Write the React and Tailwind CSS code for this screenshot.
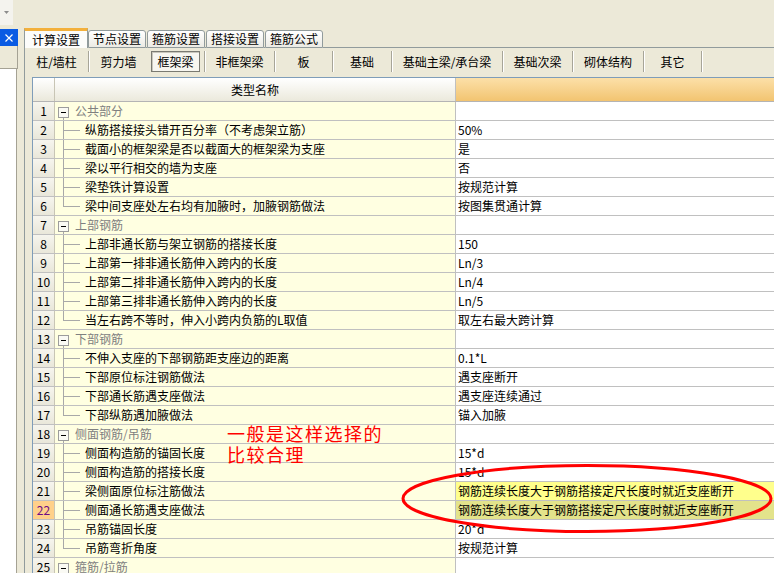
import React from 'react';

const rows = [
  { n: 1, g: true, t: '公共部分' },
  { n: 2, t: '纵筋搭接接头错开百分率（不考虑架立筋）', v: '50%' },
  { n: 3, t: '截面小的框架梁是否以截面大的框架梁为支座', v: '是' },
  { n: 4, t: '梁以平行相交的墙为支座', v: '否' },
  { n: 5, t: '梁垫铁计算设置', v: '按规范计算' },
  { n: 6, t: '梁中间支座处左右均有加腋时，加腋钢筋做法', v: '按图集贯通计算', last: true },
  { n: 7, g: true, t: '上部钢筋' },
  { n: 8, t: '上部非通长筋与架立钢筋的搭接长度', v: '150' },
  { n: 9, t: '上部第一排非通长筋伸入跨内的长度', v: 'Ln/3' },
  { n: 10, t: '上部第二排非通长筋伸入跨内的长度', v: 'Ln/4' },
  { n: 11, t: '上部第三排非通长筋伸入跨内的长度', v: 'Ln/5' },
  { n: 12, t: '当左右跨不等时，伸入小跨内负筋的L取值', v: '取左右最大跨计算', last: true },
  { n: 13, g: true, t: '下部钢筋' },
  { n: 14, t: '不伸入支座的下部钢筋距支座边的距离', v: '0.1*L' },
  { n: 15, t: '下部原位标注钢筋做法', v: '遇支座断开' },
  { n: 16, t: '下部通长筋遇支座做法', v: '遇支座连续通过' },
  { n: 17, t: '下部纵筋遇加腋做法', v: '锚入加腋', last: true },
  { n: 18, g: true, t: '侧面钢筋/吊筋' },
  { n: 19, t: '侧面构造筋的锚固长度', v: '15*d' },
  { n: 20, t: '侧面构造筋的搭接长度', v: '15*d' },
  { n: 21, t: '梁侧面原位标注筋做法', v: '钢筋连续长度大于钢筋搭接定尺长度时就近支座断开' },
  { n: 22, t: '侧面通长筋遇支座做法', v: '钢筋连续长度大于钢筋搭接定尺长度时就近支座断开' },
  { n: 23, t: '吊筋锚固长度', v: '20*d' },
  { n: 24, t: '吊筋弯折角度', v: '按规范计算', last: true },
  { n: 25, g: true, t: '箍筋/拉筋' },
];

const mainTabs = ['节点设置', '箍筋设置', '搭接设置', '箍筋公式'];

const subTabs = [
  { t: '柱/墙柱', w: 'w-[64px]', sep: true },
  { t: '剪力墙', w: 'w-[59px]', sep: false },
  { t: '框架梁', w: 'w-[57px]', sep: true, active: true },
  { t: '非框架梁', w: 'w-[70px]', sep: true },
  { t: '板', w: 'w-[58px]', sep: true },
  { t: '基础', w: 'w-[59px]', sep: true },
  { t: '基础主梁/承台梁', w: 'w-[111px]', sep: true },
  { t: '基础次梁', w: 'w-[70px]', sep: true },
  { t: '砌体结构', w: 'w-[71px]', sep: true },
  { t: '其它', w: 'w-[58px]', sep: true },
];

function Tree({ r }) {
  if (r.g) {
    return (
      <svg width="20" height="18" className="shrink-0">
        <rect x="3.5" y="5.5" width="10" height="10" fill="#FAFAF4" stroke="#9C9C9C" />
        <line x1="6" x2="11" y1="10.5" y2="10.5" stroke="#000" />
        {r.n !== 25 && <line x1="8.5" x2="8.5" y1="16" y2="18" stroke="#A8A8A8" />}
      </svg>
    );
  }
  return (
    <svg width="28" height="18" className="shrink-0">
      <line x1="8.5" x2="8.5" y1="0" y2={r.last ? 9.5 : 18} stroke="#A8A8A8" />
      <line x1="8" x2="25" y1="9.5" y2="9.5" stroke="#A8A8A8" />
    </svg>
  );
}

function Row({ r }) {
  const numCls =
    r.n === 22 ? 'bg-[#FFD08A] text-[#6E0D86]' : 'bg-linear-to-b from-[#F6F5EE] to-[#E9E7DA] text-black';
  const valBg = r.n === 21 ? 'bg-[#FFFF8C]' : r.n === 22 ? 'bg-[#E3E38B]' : 'bg-white';
  return (
    <div className="flex h-[19px] border-b border-[#C0C0C0]">
      <div className={`w-[22px] shrink-0 flex items-center justify-center border-r border-[#C8C5B5] leading-[18px] ${numCls}`}>
        {r.n}
      </div>
      <div className="w-[401px] shrink-0 flex items-center bg-[#FFFFE1] border-r border-[#C0C0C0] whitespace-nowrap overflow-hidden">
        <Tree r={r} />
        <span className={r.g ? 'text-[#808080] leading-[18px]' : 'ml-[2px] text-black leading-[18px]'}>{r.t}</span>
      </div>
      <div className={`flex-1 flex items-center pl-[2px] leading-[18px] whitespace-nowrap overflow-hidden ${valBg}`}>
        {r.v}
      </div>
    </div>
  );
}

export default function App() {
  return (
    <div className="relative w-[774px] h-[573px] overflow-hidden bg-[#ECE9D8] text-[12px] text-black font-['Noto_Sans_CJK_SC','Liberation_Sans',sans-serif]">
      {/* top bar */}
      <div className="h-[28px] flex">
        <div className="w-[13px] h-[25px] bg-[#F4F3EE] flex items-center justify-center">
          <svg width="5" height="3">
            <polygon points="0,0 5,0 2.5,3" fill="#8C8C8C" />
          </svg>
        </div>
      </div>

      <div className="flex h-[545px]">
        {/* left panel */}
        <div className="w-[18px] shrink-0 flex flex-col pt-[1px]">
          <div className="h-[17px] bg-[#0A5BE3] flex items-center justify-center">
            <svg width="8" height="8">
              <path d="M0.5 0.5 L7.5 7.5 M7.5 0.5 L0.5 7.5" stroke="#fff" strokeWidth="1.2" />
            </svg>
          </div>
          <div className="h-[23px] border-r border-b border-[#A5A294]" />
          <div className="flex-1 mr-[1px] bg-white border-r border-[#A5A294]" />
        </div>
        <div className="w-[6px] shrink-0" />

        {/* tab control */}
        <div className="flex-1 flex flex-col">
          <div className="h-[20px] flex items-end">
            <div className="w-[64px] h-[20px] bg-[#FCFCFA] border-l border-r border-[#919B9C] border-t-[3px] border-t-[#F3B03B] flex items-center justify-center leading-[16px]">
              计算设置
            </div>
            {mainTabs.map((t, i) => (
              <React.Fragment key={t}>
                {i > 0 && <div className="w-px h-px self-end bg-[#919B9C]" />}
                <div className="w-[58px] h-[18px] rounded-t-[3px] border border-[#919B9C] bg-linear-to-b from-white to-[#ECEBE4] flex items-center justify-center leading-[16px]">
                  {t}
                </div>
              </React.Fragment>
            ))}
            <div className="flex-1 h-px bg-[#919B9C]" />
          </div>

          <div className="flex-1 flex flex-col border-l border-[#919B9C]">
            {/* sub tabs */}
            <div className="h-[29px] pt-[3px] flex items-start shrink-0">
              {subTabs.map((s) => (
                <div
                  key={s.t}
                  className={`${s.w} h-[21px] flex items-center justify-center ${s.sep ? 'border-r border-[#A7A598] shadow-[1px_0_0_#FFFFFF]' : ''}`}
                >
                  {s.active ? (
                    <div className="w-[49px] h-[21px] -ml-[1px] border border-[#7A7A72] bg-[#F7F6F0] flex items-center justify-center leading-[16px] shadow-[inset_1px_1px_0_#C9C7BC]">
                      {s.t}
                    </div>
                  ) : (
                    <span className="leading-[16px]">{s.t}</span>
                  )}
                </div>
              ))}
            </div>

            {/* grid */}
            <div className="ml-[7px] flex-1 flex flex-col border-t border-l border-[#7F9DB9] bg-white overflow-hidden">
              <div className="flex h-[24px] shrink-0 border-b border-[#B4B4B4]">
                <div className="w-[22px] shrink-0 border-r border-[#C8C5B5] bg-linear-to-b from-white to-[#EAE8DB]" />
                <div className="w-[401px] shrink-0 border-r border-[#C0C0C0] bg-linear-to-b from-white to-[#EBE9DC] flex items-center justify-center leading-[16px]">
                  类型名称
                </div>
                <div className="flex-1 bg-linear-to-b from-[#FCE0A8] to-[#F2C470]" />
              </div>
              {rows.map((r) => (
                <Row key={r.n} r={r} />
              ))}
            </div>
          </div>
        </div>
      </div>

      {/* annotation */}
      <div className="absolute left-[227px] top-[423px] text-[18px] leading-[21px] tracking-[1.5px] text-[#FF0000] whitespace-nowrap">
        <div>一般是这样选择的</div>
        <div>比较合理</div>
      </div>
      <svg className="absolute left-0 top-0 pointer-events-none" width="774" height="573">
        <ellipse cx="587" cy="498.5" rx="184" ry="33" fill="none" stroke="#FF0000" strokeWidth="3" />
      </svg>
    </div>
  );
}
